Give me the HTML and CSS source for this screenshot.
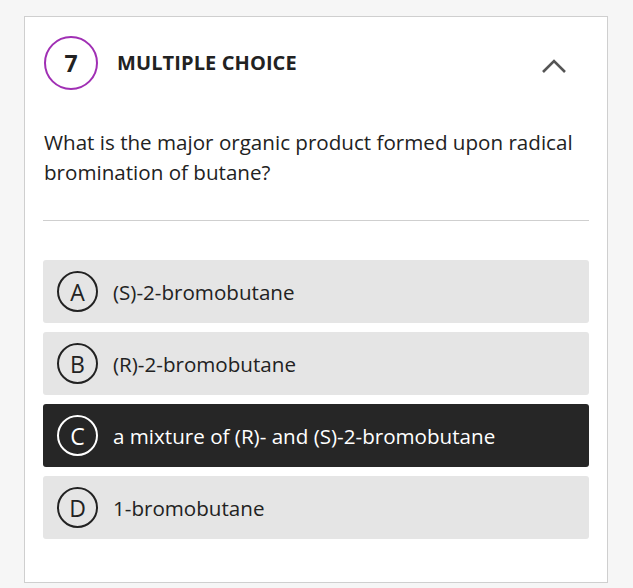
FILE: index.html
```html
<!DOCTYPE html>
<html>
<head>
<meta charset="utf-8">
<link rel="stylesheet" href="styles.css">
</head>
<body>
<div class="card">
  <div class="header">
    <div class="qnum">7</div>
    <div class="qtype">MULTIPLE CHOICE</div>
    <svg class="chevron" width="26" height="16" viewBox="0 0 26 16"><polyline points="2,14 13,3 24,14" fill="none" stroke="#555" stroke-width="2.6"/></svg>
  </div>
  <p class="question">What is the major organic product formed upon radical bromination of butane?</p>
  <div class="sep"></div>
  <div class="options">
    <div class="option"><span class="letter">A</span><span class="text">(S)-2-bromobutane</span></div>
    <div class="option"><span class="letter">B</span><span class="text">(R)-2-bromobutane</span></div>
    <div class="option selected"><span class="letter">C</span><span class="text">a mixture of (R)- and (S)-2-bromobutane</span></div>
    <div class="option"><span class="letter">D</span><span class="text">1-bromobutane</span></div>
  </div>
</div>
</body>
</html>
```
FILE: styles.css
```css
html, body {
  margin: 0;
  padding: 0;
  background: #f6f6f6;
  font-family: "Open Sans", "Liberation Sans", sans-serif;
  color: #222;
}
.card {
  box-sizing: border-box;
  margin: 16px 0 0 24px;
  width: 584px;
  height: 567px;
  background: #fff;
  border: 1px solid #cfcfcf;
  padding: 19px 18px 0 18px;
  display: flex;
  flex-direction: column;
}
.header {
  display: flex;
  align-items: center;
  padding-left: 1px;
}
.qnum {
  box-sizing: border-box;
  width: 54px;
  height: 54px;
  border: 2px solid #a02fb4;
  border-radius: 50%;
  display: flex;
  align-items: center;
  justify-content: center;
  font-weight: 700;
  font-size: 23px;
}
.qtype {
  margin-left: 19px;
  font-weight: 700;
  font-size: 20px;
  letter-spacing: 0.1px;
  flex: 1;
  margin-top: -2px;
}
.chevron {
  margin-right: 22px;
  margin-top: 5px;
}
.question {
  margin: 37px 0 0 1px;
  font-size: 20.6px;
  line-height: 30px;
}
.sep {
  margin-top: 33px;
  height: 1px;
  background: #cfcfcf;
}
.options {
  margin-top: 39px;
  display: flex;
  flex-direction: column;
  gap: 9px;
}
.option {
  height: 63px;
  background: #e5e5e5;
  border-radius: 3px;
  display: flex;
  align-items: center;
  padding-left: 14px;
  font-size: 20.6px;
}
.option.selected {
  background: #262626;
  color: #fff;
}
.letter {
  box-sizing: border-box;
  width: 41px;
  height: 41px;
  border: 2.5px solid currentColor;
  border-radius: 50%;
  display: flex;
  align-items: center;
  justify-content: center;
  font-size: 23px;
  margin-right: 15px;
}
```
